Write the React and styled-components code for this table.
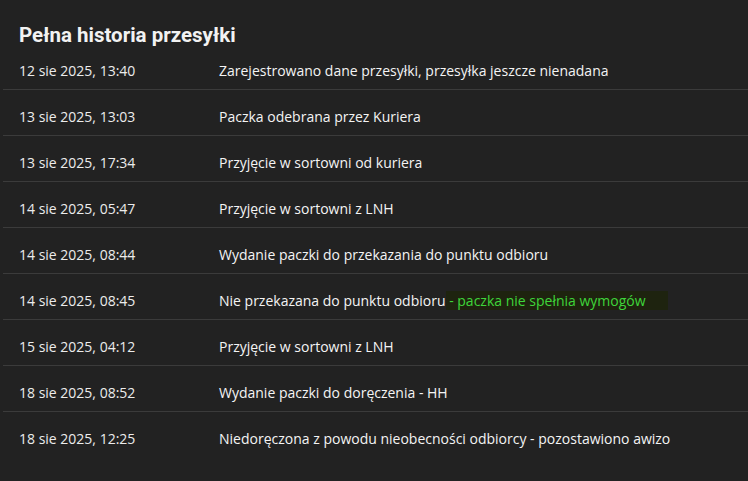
import styled, { createGlobalStyle } from 'styled-components';

const GlobalStyle = createGlobalStyle`
	html, body {
		margin: 0;
		padding: 0;
		background: #222222;
	}
	body {
		font-family: 'Open Sans', 'Noto Sans', sans-serif;
	}
`;

const Panel = styled.section`
	width: 748px;
	height: 481px;
	box-sizing: border-box;
	padding: 22px 0 0 3px;
	background: #222222;
	overflow: hidden;
`;

const Title = styled.h2`
	margin: 0 0 0 16px;
	font-family: Roboto, 'Open Sans', sans-serif;
	font-weight: 700;
	font-size: 20.5px;
	line-height: 26px;
	color: #f2f2f2;
`;

const List = styled.ul`
	list-style: none;
	margin: 0;
	padding: 0;
`;

const Row = styled.li`
	display: grid;
	grid-template-columns: 200px 1fr;
	padding: 13px 16px 9px;
	line-height: 19px;
	font-size: 14px;
	color: #f0f0f0;
	border-bottom: 1px solid ${(p) => (p.$last ? 'transparent' : '#3b3b3b')};

	& + & {
		padding-top: 17px;
	}
`;

const Date = styled.span`
	color: #ececec;
`;

const Note = styled.span`
	color: #f4f4f4;
`;

const Warn = styled.span`
	display: inline-block;
	padding: 0 22px 0 3px;
	margin-left: -3px;
	background: #1e230f;
	color: #3ed63a;
`;

const events = [
	['12 sie 2025, 13:40', 'Zarejestrowano dane przesyłki, przesyłka jeszcze nienadana'],
	['13 sie 2025, 13:03', 'Paczka odebrana przez Kuriera'],
	['13 sie 2025, 17:34', 'Przyjęcie w sortowni od kuriera'],
	['14 sie 2025, 05:47', 'Przyjęcie w sortowni z LNH'],
	['14 sie 2025, 08:44', 'Wydanie paczki do przekazania do punktu odbioru'],
	['14 sie 2025, 08:45', 'Nie przekazana do punktu odbioru', '- paczka nie spełnia wymogów'],
	['15 sie 2025, 04:12', 'Przyjęcie w sortowni z LNH'],
	['18 sie 2025, 08:52', 'Wydanie paczki do doręczenia - HH'],
	['18 sie 2025, 12:25', 'Niedoręczona z powodu nieobecności odbiorcy - pozostawiono awizo'],
];

function App() {
	return (
		<>
			<GlobalStyle />
			<Panel>
				<Title>Pełna historia przesyłki</Title>
				<List>
					{events.map(([date, text, warn], i) => (
						<Row key={date + i} $last={i === events.length - 1}>
							<Date>{date}</Date>
							<Note>
								{text}
								{warn && (
									<>
										{' '}
										<Warn>{warn}</Warn>
									</>
								)}
							</Note>
						</Row>
					))}
				</List>
			</Panel>
		</>
	);
}

export default App;
